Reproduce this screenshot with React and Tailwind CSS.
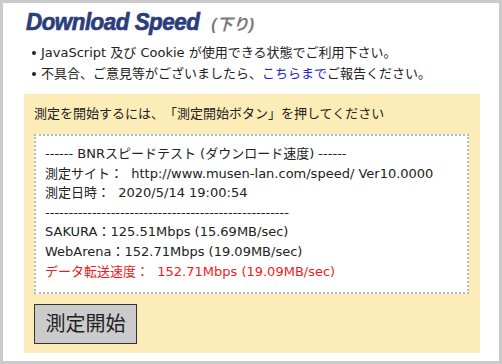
const lines = [
  '------ BNRスピードテスト (ダウンロード速度) ------',
  '測定サイト：  http://www.musen-lan.com/speed/ Ver10.0000',
  '測定日時：  2020/5/14 19:00:54',
  '----------------------------------------------------',
  'SAKURA：125.51Mbps (15.69MB/sec)',
  'WebArena：152.71Mbps (19.09MB/sec)',
];

export default function App() {
  return (
    <div className="w-[502px] h-[364px] border-[3px] border-[#cbcbcb] bg-white font-['DejaVu_Sans','Noto_Sans_CJK_JP',sans-serif] text-[#222] overflow-hidden [text-spacing-trim:space-all]">
      {/* Title */}
      <div className="pt-[5px] pl-[23px] h-[33px] font-['Liberation_Sans','Noto_Sans_CJK_JP',sans-serif] whitespace-nowrap leading-[28px]">
        <span className="inline-block origin-left scale-x-[0.93] text-[24px] font-bold italic tracking-[-0.5px] text-[#2b3d7b] [-webkit-text-stroke:0.7px_#2b3d7b]">Download Speed</span>
        <span className="ml-[-1px] text-[16px] font-bold italic text-[#7a7a7a]">(下り)</span>
      </div>

      {/* Notes */}
      <ul className="mt-[6px] pl-[29px] text-[13px] leading-[21px]">
        <li className="flex items-center gap-[5px]">
          <span className="w-[4px] h-[4px] rounded-full bg-[#222]" />
          <span className="whitespace-pre">JavaScript 及び Cookie が使用できる状態でご利用下さい。</span>
        </li>
        <li className="flex items-center gap-[5px]">
          <span className="w-[4px] h-[4px] rounded-full bg-[#222]" />
          <span>
            不具合、ご意見等がございましたら、<a className="text-[#2424d6]">こちらまで</a>ご報告ください。
          </span>
        </li>
      </ul>

      {/* Test panel */}
      <div className="mt-[10px] ml-[21px] w-[456px] h-[259px] bg-[#fcedb8] px-[10px] pt-[10px]">
        <p className="text-[13px] leading-[20px] mb-[10px]">測定を開始するには、「測定開始ボタン」を押してください</p>
        <div className="w-[435px] h-[160px] bg-white border-2 border-dotted border-[#b8b8b8] pl-[9px] pt-[8px] text-[13px] leading-[19.6px] whitespace-pre overflow-hidden">
          {lines.map((l, i) => (
            <div key={i}>{l}</div>
          ))}
          <div className="text-[#ee1c1c]">データ転送速度：  152.71Mbps (19.09MB/sec)</div>
        </div>
        <button className="mt-[10px] w-[103px] h-[40px] border border-[#333] bg-[#cbcbcb] text-[20px] text-[#222] leading-none">
          測定開始
        </button>
      </div>
    </div>
  );
}
